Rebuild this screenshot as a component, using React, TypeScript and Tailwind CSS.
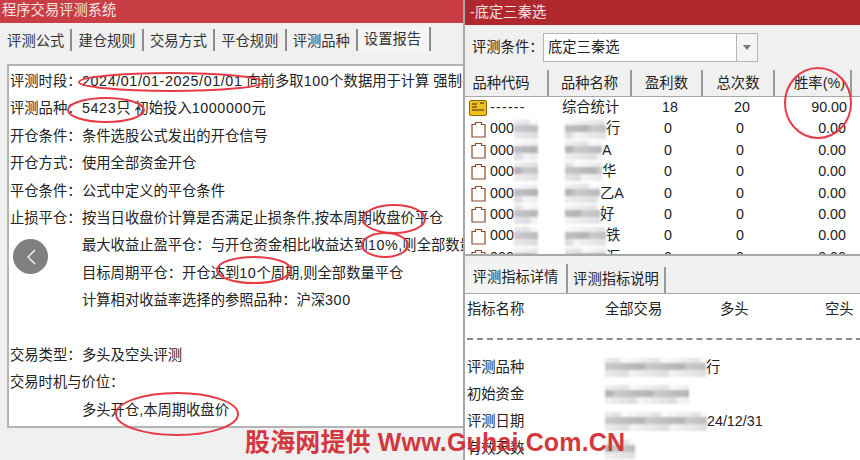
const font = "font-['Liberation_Sans','Noto_Sans_CJK_SC',sans-serif]";

const leftTabs = ['评测公式', '建仓规则', '交易方式', '平仓规则', '评测品种'];

const reportRows: { label?: string; text: string; gapBefore?: boolean }[] = [
  { label: '评测时段：', text: '2024/01/01-2025/01/01 向前多取100个数据用于计算 强制平仓' },
  { label: '评测品种：', text: '5423只 初始投入1000000元' },
  { label: '开仓条件：', text: '条件选股公式发出的开仓信号' },
  { label: '开仓方式：', text: '使用全部资金开仓' },
  { label: '平仓条件：', text: '公式中定义的平仓条件' },
  { label: '止损平仓：', text: '按当日收盘价计算是否满足止损条件,按本周期收盘价平仓' },
  { text: '最大收益止盈平仓：与开仓资金相比收益达到10%,则全部数量平仓' },
  { text: '目标周期平仓：开仓达到10个周期,则全部数量平仓' },
  { text: '计算相对收益率选择的参照品种：沪深300' },
  { label: '交易类型：', text: '多头及空头评测', gapBefore: true },
  { label: '交易时机与价位：', text: '' },
  { text: '多头开仓,本周期收盘价' },
];

const tableRows = [
  { name: '行', blur: 41, seed: 3 },
  { name: 'A', blur: 37, seed: 7 },
  { name: '华', blur: 37, seed: 11 },
  { name: '乙A', blur: 35, seed: 2 },
  { name: '好', blur: 35, seed: 5 },
  { name: '铁', blur: 41, seed: 13 },
  { name: '汇', blur: 41, seed: 9 },
];

const headers = [
  { label: '品种代码', w: 'w-[84px] pr-[10px]' },
  { label: '品种名称', w: 'w-[83px]' },
  { label: '盈利数', w: 'w-[71px]' },
  { label: '总次数', w: 'w-[72px]' },
  { label: '胜率(%)', w: 'w-[77px] pl-[14px]' },
];

// 数字在原图里字距偏宽
function Spaced({ text }: { text: string }) {
  return (
    <>
      {text.split(/([0-9/\-%]+)/).map((part, i) =>
        i % 2 === 1 ? (
          <span key={i} className="tracking-[0.6px]">{part}</span>
        ) : (
          <span key={i}>{part}</span>
        ),
      )}
    </>
  );
}

function Ticket({ gold }: { gold?: boolean }) {
  if (gold) {
    return (
      <svg width="18" height="17" viewBox="0 0 18 17" className="shrink-0">
        <rect x="0.5" y="1.5" width="17" height="15" rx="1.5" fill="#f0c020" stroke="#8a6a10" />
        <path d="M3 5h5M3 8h5M11 4h4M3 11h12" stroke="#7a5a10" strokeWidth="1.4" />
      </svg>
    );
  }
  return (
    <svg width="15" height="17" viewBox="0 0 15 17" className="shrink-0">
      <path d="M1 3.5h3.5V1.5h6v2H14V16H1z" fill="#fff" stroke="#8b4a32" strokeWidth="1.2" />
    </svg>
  );
}

// 打码块：三行灰色马赛克，中间一行较深
function Mosaic({ width, seed }: { width: number; seed: number }) {
  const count = Math.ceil(width / 8);
  const shade = (row: number, col: number, base: number) => {
    const v = base + ((seed * 7 + row * 13 + col * 29) % 5) * 5;
    return `rgb(${v},${v},${v + 3})`;
  };
  return (
    <span className="inline-flex h-[19px] shrink-0 flex-col overflow-hidden blur-[1px]" style={{ width }}>
      {[
        { h: 'h-[5px]', base: 228 },
        { h: 'h-[7px]', base: 180 },
        { h: 'h-[7px]', base: 222 },
      ].map((row, r) => (
        <span key={r} className={`flex shrink-0 ${row.h}`}>
          {Array.from({ length: count }, (_, c) => (
            <span key={c} className="h-full w-[8px] shrink-0" style={{ backgroundColor: shade(r, c, row.base) }} />
          ))}
        </span>
      ))}
    </span>
  );
}

function ReportPanel() {
  return (
    <div className="ml-[7px] mt-[13px] h-[364px] overflow-hidden border-2 border-r-0 border-[#b4b4b4] bg-white pl-[1px] pt-[2px] text-[14.3px] text-[#222]">
      {reportRows.map((r) => (
        <div key={r.label ?? r.text} className={`flex h-[27.4px] items-center whitespace-nowrap ${r.gapBefore ? 'mt-[27.4px]' : ''}`}>
          {r.label && r.text === '' ? (
            <span>{r.label}</span>
          ) : (
            <>
              <span className="w-[72px] shrink-0">{r.label}</span>
              <span><Spaced text={r.text} /></span>
            </>
          )}
        </div>
      ))}
    </div>
  );
}

function LeftWindow() {
  return (
    <div className="flex h-full w-[463px] shrink-0 flex-col bg-[#f0f0f0]">
      <div className="flex h-[23px] items-center bg-[#c83e44] pb-[2px] pl-[2px] text-[14.3px] text-[#f6e4e4]">程序交易评测系统</div>
      <div className="flex h-[28px] items-end pl-[1px] text-[14.3px] text-[#333]">
        {leftTabs.map((t) => (
          <div key={t} className="flex h-[22px] w-[71.4px] items-center justify-center border-r-2 border-[#8c8c8c] pt-[3px]">
            {t}
          </div>
        ))}
        <div className="flex h-[24px] w-[73px] items-center justify-center border-r-2 border-[#8c8c8c] bg-[#f6f6f6] pr-[2px] pt-[1px]">设置报告</div>
      </div>
      <ReportPanel />
    </div>
  );
}

function RightWindow() {
  return (
    <div className="flex h-full flex-1 flex-col border-l-2 border-[#a8a8a8] bg-[#f0f0f0] text-[14.3px] text-[#222]">
      <div className="flex h-[25px] items-center bg-[#b0282d] pl-[5px] text-[#f6e4e4]">-底定三秦选</div>
      <div className="flex h-[45px] items-center pl-[7px]">
        <span className="w-[71px] shrink-0 whitespace-nowrap">评测条件：</span>
        <div className="flex h-[29px] w-[215px] items-center border border-[#b4b4b4] bg-white pl-[4px]">
          <span className="flex-1">底定三秦选</span>
          <span className="flex h-full w-[21px] items-center justify-center border-l border-[#b4b4b4] bg-[#f4f4f4]">
            <span className="h-0 w-0 border-x-[4px] border-t-[5px] border-x-transparent border-t-[#777]" />
          </span>
        </div>
      </div>
      {/* 品种表 */}
      <div className="h-[186px] overflow-hidden border-b-2 border-[#a8a8a8] bg-white">
        <div className="flex h-[27px] overflow-hidden border-b border-[#a8a8a8] bg-[#f0f0f0]">
          {headers.map((h) => (
            <div key={h.label} className={`flex shrink-0 items-center justify-center border-r-2 border-[#9a9a9a] pt-[2px] ${h.w}`}>
              {h.label}
            </div>
          ))}
          <div className="w-[10px]" />
        </div>
        <div className="flex h-[21.4px] items-center pl-[4px]">
          <Ticket gold />
          <span className="ml-[3px] w-[61px] tracking-[1.2px]">------</span>
          <span className="w-[83px] pl-[11px]">综合统计</span>
          <span className="w-[72px] text-center">18</span>
          <span className="w-[72px] text-center">20</span>
          <span className="w-[69px] text-right">90.00</span>
        </div>
        {tableRows.map((r, i) => (
          <div key={i} className="flex h-[21.4px] items-center pl-[6px]">
            <Ticket />
            <span className="ml-[4px] flex w-[59px] items-center">000<Mosaic width={24} seed={r.seed} /></span>
            <span className="flex w-[83px] items-center whitespace-nowrap pl-[16px]"><Mosaic width={r.blur} seed={r.seed + 4} />{r.name}</span>
            <span className="w-[72px] text-center">0</span>
            <span className="w-[72px] text-center">0</span>
            <span className="w-[70px] text-right">0.00</span>
          </div>
        ))}
      </div>
      {/* 指标页签 */}
      <div className="flex h-[38px] items-end border-b border-[#a8a8a8]">
        <div className="flex h-[29px] w-[103px] items-center justify-center border-r-2 border-[#9a9a9a] bg-[#f4f4f4] pb-[2px]">评测指标详情</div>
        <div className="flex h-[26px] w-[98px] items-center justify-center border-r-2 border-[#9a9a9a]">评测指标说明</div>
      </div>
      <div className="flex-1 overflow-hidden bg-white pl-[2px]">
        <div className="flex h-[32px] items-center whitespace-nowrap">
          <span className="w-[138px]">指标名称</span>
          <span className="w-[115px]">全部交易</span>
          <span className="w-[105px]">多头</span>
          <span>空头</span>
        </div>
        <div className="mb-[14px] mt-[12px] border-t-2 border-dashed border-[#8a8a8a]" />
        {[
          { k: '评测品种', blur: 101, v: '行', seed: 3 },
          { k: '初始资金', blur: 84, v: '', seed: 6 },
          { k: '评测日期', blur: 102, v: '24/12/31', seed: 8 },
          { k: '有效天数', blur: 30, v: '', seed: 1 },
        ].map((r) => (
          <div key={r.k} className="flex h-[27.2px] items-center whitespace-nowrap">
            <span className="w-[138px]">{r.k}</span>
            <Mosaic width={r.blur} seed={r.seed} />
            <span>{r.v}</span>
          </div>
        ))}
      </div>
    </div>
  );
}

export default function App() {
  return (
    <div className={`relative flex h-[460px] w-[860px] overflow-hidden bg-[#f0f0f0] ${font}`}>
      <LeftWindow />
      <RightWindow />

      {/* 红圈标注 */}
      <svg width="860" height="460" className="pointer-events-none absolute inset-0" fill="none" stroke="#e63b44" strokeWidth="2">
        <ellipse cx="171" cy="82" rx="92" ry="9" />
        <ellipse cx="106" cy="110" rx="38" ry="12" />
        <ellipse cx="394" cy="219" rx="31" ry="14" />
        <ellipse cx="385" cy="245" rx="23" ry="12" />
        <ellipse cx="254" cy="270" rx="37" ry="13" />
        <ellipse cx="177" cy="414" rx="61" ry="21" />
        <ellipse cx="818" cy="103" rx="33" ry="35" />
      </svg>

      {/* 水印 */}
      <div className="absolute left-[245px] top-[429px] flex h-[28px] items-center whitespace-nowrap text-[25px] font-bold tracking-[0.15px] text-[#d4383f]">
        股海网提供 Www.Guhai.Com.CN
      </div>

      {/* 返回按钮 */}
      <div className="absolute left-[13px] top-[239px] flex h-[35px] w-[35px] items-center justify-center rounded-full bg-[#808080]">
        <svg width="12" height="18" viewBox="0 0 12 18" fill="none" stroke="#fff" strokeWidth="1.3">
          <path d="M10 2 3 9l7 7" />
        </svg>
      </div>
    </div>
  );
}
